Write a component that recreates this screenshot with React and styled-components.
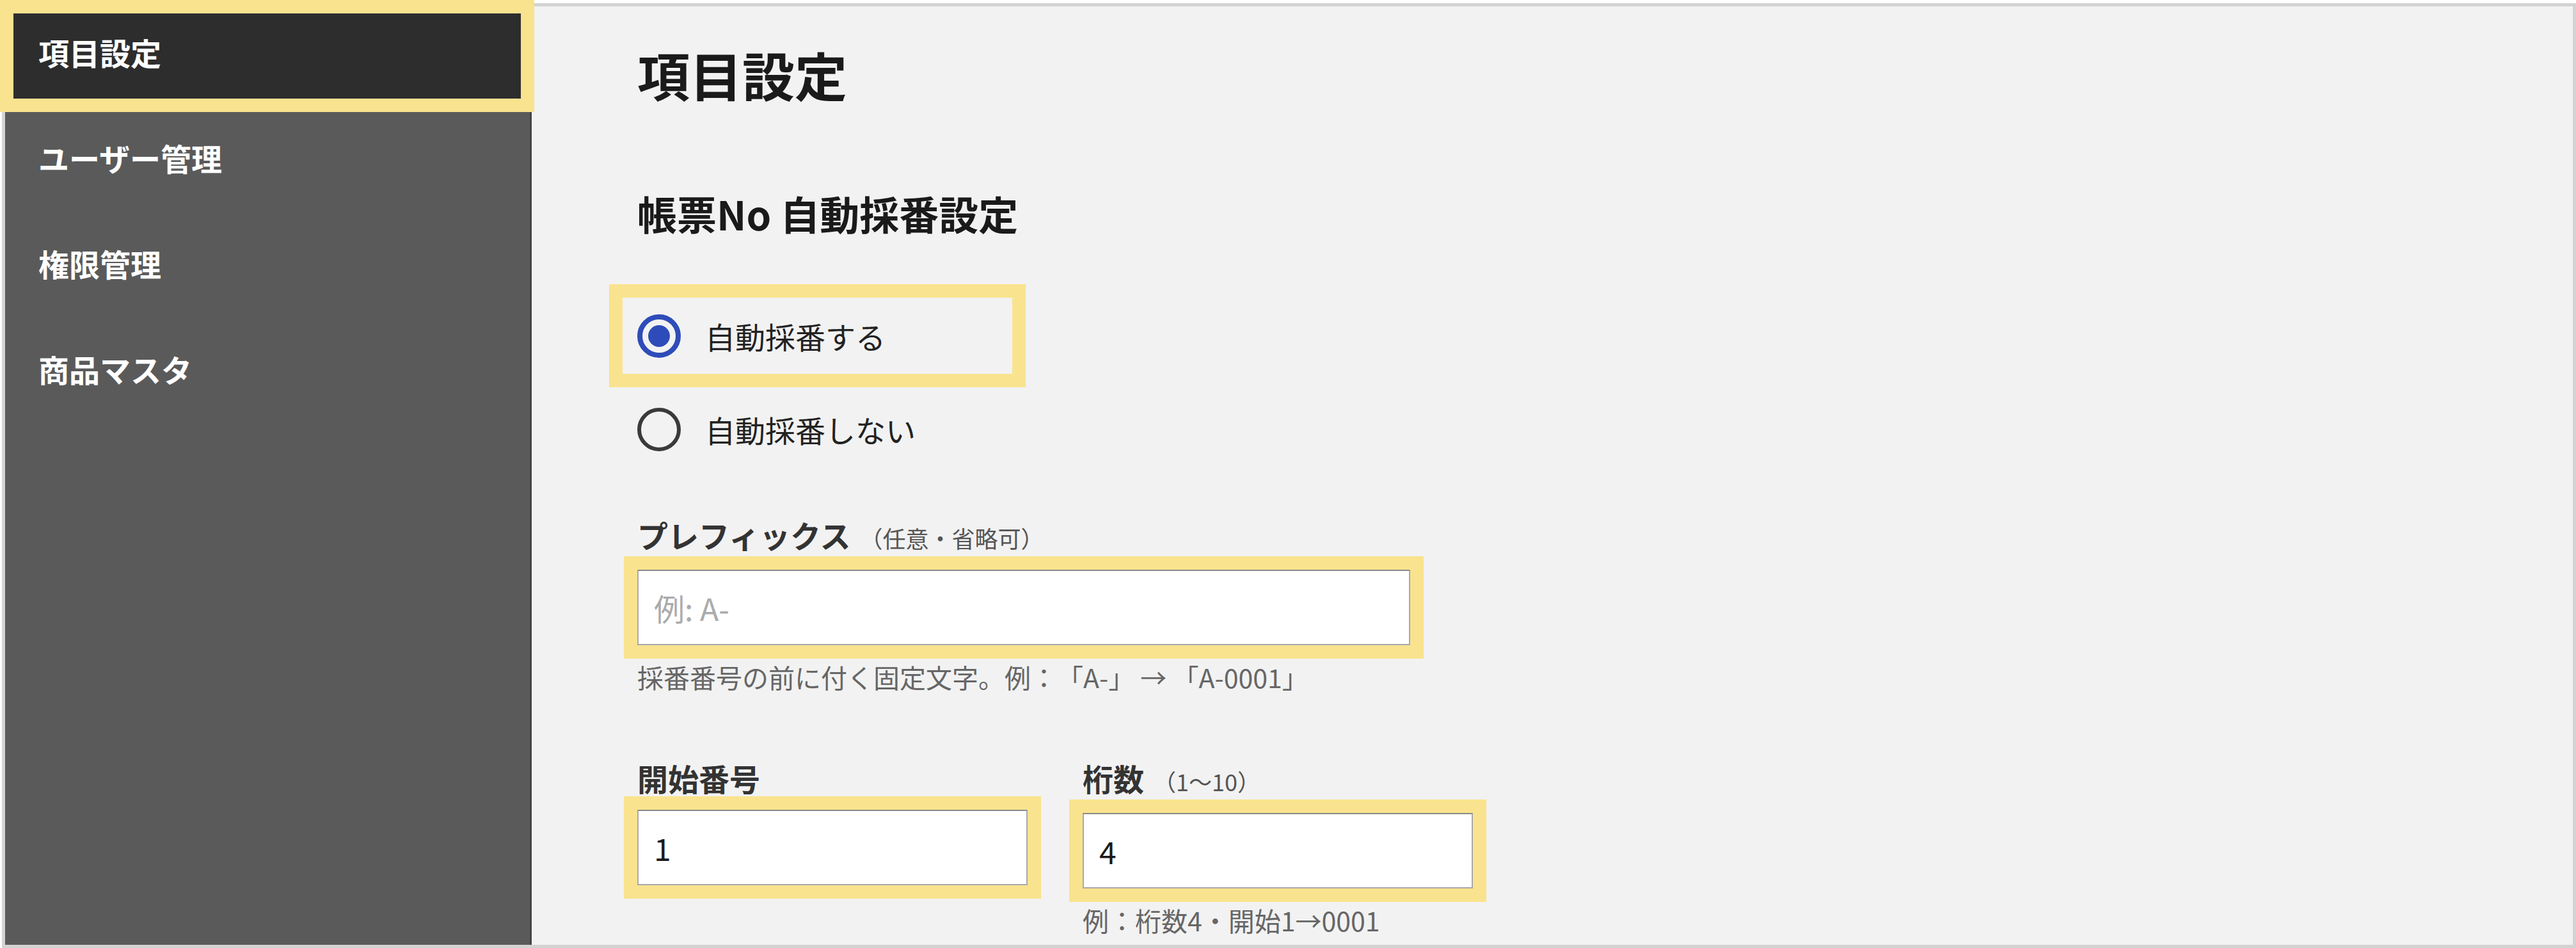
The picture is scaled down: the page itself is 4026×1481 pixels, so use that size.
import React from 'react'
import styled, { createGlobalStyle, css } from 'styled-components'

const FONT = `"Noto Sans CJK JP", "Noto Sans", sans-serif`
const MARK = '#f9e38e'

const GlobalStyle = createGlobalStyle`
    html, body {
        margin: 0;
        padding: 0;
        background: #ffffff;
        overflow: hidden;
    }
`

const navItems = [
    { label: '項目設定', active: true },
    { label: 'ユーザー管理' },
    { label: '権限管理' },
    { label: '商品マスタ' },
]

const App = () => {
    return (
        <>
            <GlobalStyle />
            <Frame>
                <Sidebar>
                    {navItems.map((item) => (
                        <NavItem key={item.label} $active={item.active} $marked={item.active}>
                            {item.label}
                        </NavItem>
                    ))}
                </Sidebar>

                <Main>
                    <Title>項目設定</Title>
                    <Subtitle>帳票No 自動採番設定</Subtitle>

                    <RadioList>
                        <RadioRow $marked>
                            <RadioMark $checked />
                            <span>自動採番する</span>
                        </RadioRow>
                        <RadioRow>
                            <RadioMark />
                            <span>自動採番しない</span>
                        </RadioRow>
                    </RadioList>

                    <FieldLabel $gap={72}>
                        プレフィックス
                        <Note>（任意・省略可）</Note>
                    </FieldLabel>
                    <TextInput $width={1208} $marked placeholder='例: A-' readOnly />
                    <Hint>採番番号の前に付く固定文字。例：「A-」 → 「A-0001」</Hint>

                    <NumberRow>
                        <Field>
                            <FieldLabel>開始番号</FieldLabel>
                            <TextInput $width={610} $marked defaultValue='1' readOnly />
                        </Field>
                        <Field>
                            <FieldLabel>
                                桁数
                                <Note>（1～10）</Note>
                            </FieldLabel>
                            <TextInput $width={610} $marked defaultValue='4' readOnly />
                            <Hint>例：桁数4・開始1→0001</Hint>
                        </Field>
                    </NumberRow>
                </Main>
            </Frame>
        </>
    )
}

export default App

const Frame = styled.div`
    box-sizing: border-box;
    width: 4023px;
    height: 1476px;
    margin: 5px 0 0 3px;
    border: 5px solid #d3d3d3;
    display: flex;
    font-family: ${FONT};
    text-spacing-trim: space-all;
`

const Sidebar = styled.nav`
    flex: none;
    box-sizing: border-box;
    width: 823px;
    background: #5a5a5a;
    border-right: 3px solid #454545;
`

const NavItem = styled.div`
    position: relative;
    box-sizing: border-box;
    height: 165px;
    display: flex;
    align-items: center;
    padding: 0 0 24px 52px;
    font-size: 48px;
    font-weight: 700;
    color: #ffffff;
    background: ${(props) => (props.$active ? '#2d2d2d' : 'transparent')};

    ${(props) =>
        props.$marked &&
        css`
            &::after {
                content: '';
                position: absolute;
                top: -10px;
                left: -8px;
                right: -7px;
                bottom: 0;
                border: 21px solid ${MARK};
                z-index: 2;
                pointer-events: none;
            }
        `}
`

const Main = styled.main`
    flex: 1;
    box-sizing: border-box;
    background: #f2f2f2;
    padding: 58px 0 0 165px;
    color: #1a1a1a;
`

const Title = styled.h1`
    margin: 0;
    font-size: 82px;
    line-height: 96px;
    font-weight: 700;
`

const Subtitle = styled.h2`
    margin: 133px 0 0;
    font-size: 62px;
    line-height: 72px;
    font-weight: 700;
`

const RadioList = styled.div`
    margin-top: 96px;
    display: flex;
    flex-direction: column;
    align-items: flex-start;
    gap: 27px;
`

const RadioRow = styled.label`
    box-sizing: border-box;
    width: 609px;
    height: 119px;
    margin-left: -23px;
    padding-left: 23px;
    display: flex;
    align-items: center;
    gap: 38px;
    font-size: 47px;
    color: #222222;
    outline: ${(props) => (props.$marked ? `21px solid ${MARK}` : 'none')};
`

const RadioMark = styled.span`
    flex: none;
    box-sizing: border-box;
    width: 68px;
    height: 68px;
    border-radius: 50%;
    border: ${(props) => (props.$checked ? '8px solid #2e4cb9' : '6px solid #3a3a3a')};
    display: grid;
    place-items: center;

    &::after {
        content: '';
        width: 34px;
        height: 34px;
        border-radius: 50%;
        background: ${(props) => (props.$checked ? '#2e4cb9' : 'transparent')};
    }
`

const FieldLabel = styled.div`
    margin-top: ${(props) => (props.$gap ? `${props.$gap}px` : '0')};
    display: flex;
    align-items: baseline;
    font-size: 48px;
    line-height: 67px;
    font-weight: 700;
    color: #333333;
`

const Note = styled.span`
    margin-left: 14px;
    font-size: 36px;
    font-weight: 400;
    color: #555555;
`

const TextInput = styled.input`
    display: block;
    box-sizing: border-box;
    width: ${(props) => `${props.$width}px`};
    height: 118px;
    margin-top: 16px;
    padding: 0 24px;
    border: 2px solid #a9a9a9;
    border-top-color: #8a8a8a;
    background: #ffffff;
    font-family: ${FONT};
    font-size: 48px;
    color: #1a1a1a;
    outline: ${(props) => (props.$marked ? `21px solid ${MARK}` : 'none')};

    &::placeholder {
        color: #ababab;
    }
`

const Hint = styled.div`
    margin-top: 25px;
    font-size: 41px;
    line-height: 49px;
    color: #666666;
`

const NumberRow = styled.div`
    margin-top: 100px;
    display: flex;
    gap: 86px;
`

const Field = styled.div`
    display: flex;
    flex-direction: column;
`
